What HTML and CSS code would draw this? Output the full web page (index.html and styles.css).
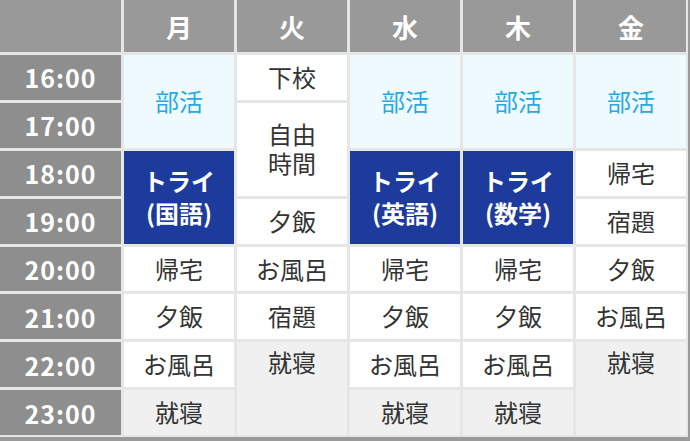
FILE: index.html
```html
<!DOCTYPE html>
<html lang="ja">
<head>
  <meta charset="UTF-8">
  <meta name="viewport" content="width=device-width, initial-scale=1.0">
  <title>時間割</title>
  <link rel="stylesheet" href="styles.css">
</head>
<body>
  <div class="schedule">
    <!-- ヘッダー -->
    <div class="head corner"></div>
    <div class="head">月</div>
    <div class="head">火</div>
    <div class="head">水</div>
    <div class="head">木</div>
    <div class="head">金</div>

    <!-- 時間 -->
    <div class="time r1">16:00</div>
    <div class="time r2">17:00</div>
    <div class="time r3">18:00</div>
    <div class="time r4">19:00</div>
    <div class="time r5">20:00</div>
    <div class="time r6">21:00</div>
    <div class="time r7">22:00</div>
    <div class="time r8">23:00</div>

    <!-- 月 -->
    <div class="cell club c1 r1 span2">部活</div>
    <div class="cell try c1 r3 span2">トライ<br>(国語)</div>
    <div class="cell c1 r5">帰宅</div>
    <div class="cell c1 r6">夕飯</div>
    <div class="cell c1 r7">お風呂</div>
    <div class="cell sleep c1 r8">就寝</div>

    <!-- 火 -->
    <div class="cell c2 r1">下校</div>
    <div class="cell c2 r2 span2">自由<br>時間</div>
    <div class="cell c2 r4">夕飯</div>
    <div class="cell c2 r5">お風呂</div>
    <div class="cell c2 r6">宿題</div>
    <div class="cell sleep top c2 r7 span2">就寝</div>

    <!-- 水 -->
    <div class="cell club c3 r1 span2">部活</div>
    <div class="cell try c3 r3 span2">トライ<br>(英語)</div>
    <div class="cell c3 r5">帰宅</div>
    <div class="cell c3 r6">夕飯</div>
    <div class="cell c3 r7">お風呂</div>
    <div class="cell sleep c3 r8">就寝</div>

    <!-- 木 -->
    <div class="cell club c4 r1 span2">部活</div>
    <div class="cell try c4 r3 span2">トライ<br>(数学)</div>
    <div class="cell c4 r5">帰宅</div>
    <div class="cell c4 r6">夕飯</div>
    <div class="cell c4 r7">お風呂</div>
    <div class="cell sleep c4 r8">就寝</div>

    <!-- 金 -->
    <div class="cell club c5 r1 span2">部活</div>
    <div class="cell c5 r3">帰宅</div>
    <div class="cell c5 r4">宿題</div>
    <div class="cell c5 r5">夕飯</div>
    <div class="cell c5 r6">お風呂</div>
    <div class="cell sleep top c5 r7 span2">就寝</div>
  </div>
</body>
</html>
```

FILE: styles.css
```css
body {
  margin: 0;
  font-family: "Noto Sans CJK JP", "Noto Sans", sans-serif;
  background-color: #fff;
}
.schedule {
  box-sizing: border-box;
  width: 690px;
  height: 441px;
  display: grid;
  grid-template-columns: 121px repeat(5, 110px);
  grid-template-rows: 52px repeat(8, 1fr);
  gap: 3px;
  padding: 0 2px 2px 0;
  border-right: 2px solid #9a9a9a;
  border-bottom: 4px solid #9a9a9a;
  background-color: #e6e6e6;
}
.head {
  background-color: #999;
  color: #fff;
  font-size: 26px;
  font-weight: bold;
  display: flex;
  align-items: center;
  justify-content: center;
}
.time {
  grid-column: 1;
  background-color: #8e8e8e;
  color: #fff;
  font-size: 25px;
  font-weight: bold;
  letter-spacing: 1px;
  display: flex;
  align-items: center;
  justify-content: center;
}
.cell {
  background-color: #fff;
  color: #333;
  font-size: 24px;
  line-height: 1.2;
  text-align: center;
  display: flex;
  align-items: center;
  justify-content: center;
}
.club {
  background-color: #eefafe;
  color: #2aa8e0;
}
.try {
  background-color: #1d3b9c;
  color: #fff;
  font-weight: bold;
  line-height: 1.32;
}
.sleep {
  background-color: #f0f0f0;
}
.top {
  align-items: flex-start;
  padding-top: 6px;
}
.c1 { grid-column: 2; }
.c2 { grid-column: 3; }
.c3 { grid-column: 4; }
.c4 { grid-column: 5; }
.c5 { grid-column: 6; }
.r1 { grid-row: 2; }
.r2 { grid-row: 3; }
.r3 { grid-row: 4; }
.r4 { grid-row: 5; }
.r5 { grid-row: 6; }
.r6 { grid-row: 7; }
.r7 { grid-row: 8; }
.r8 { grid-row: 9; }
.span2 { grid-row-end: span 2; }
```
